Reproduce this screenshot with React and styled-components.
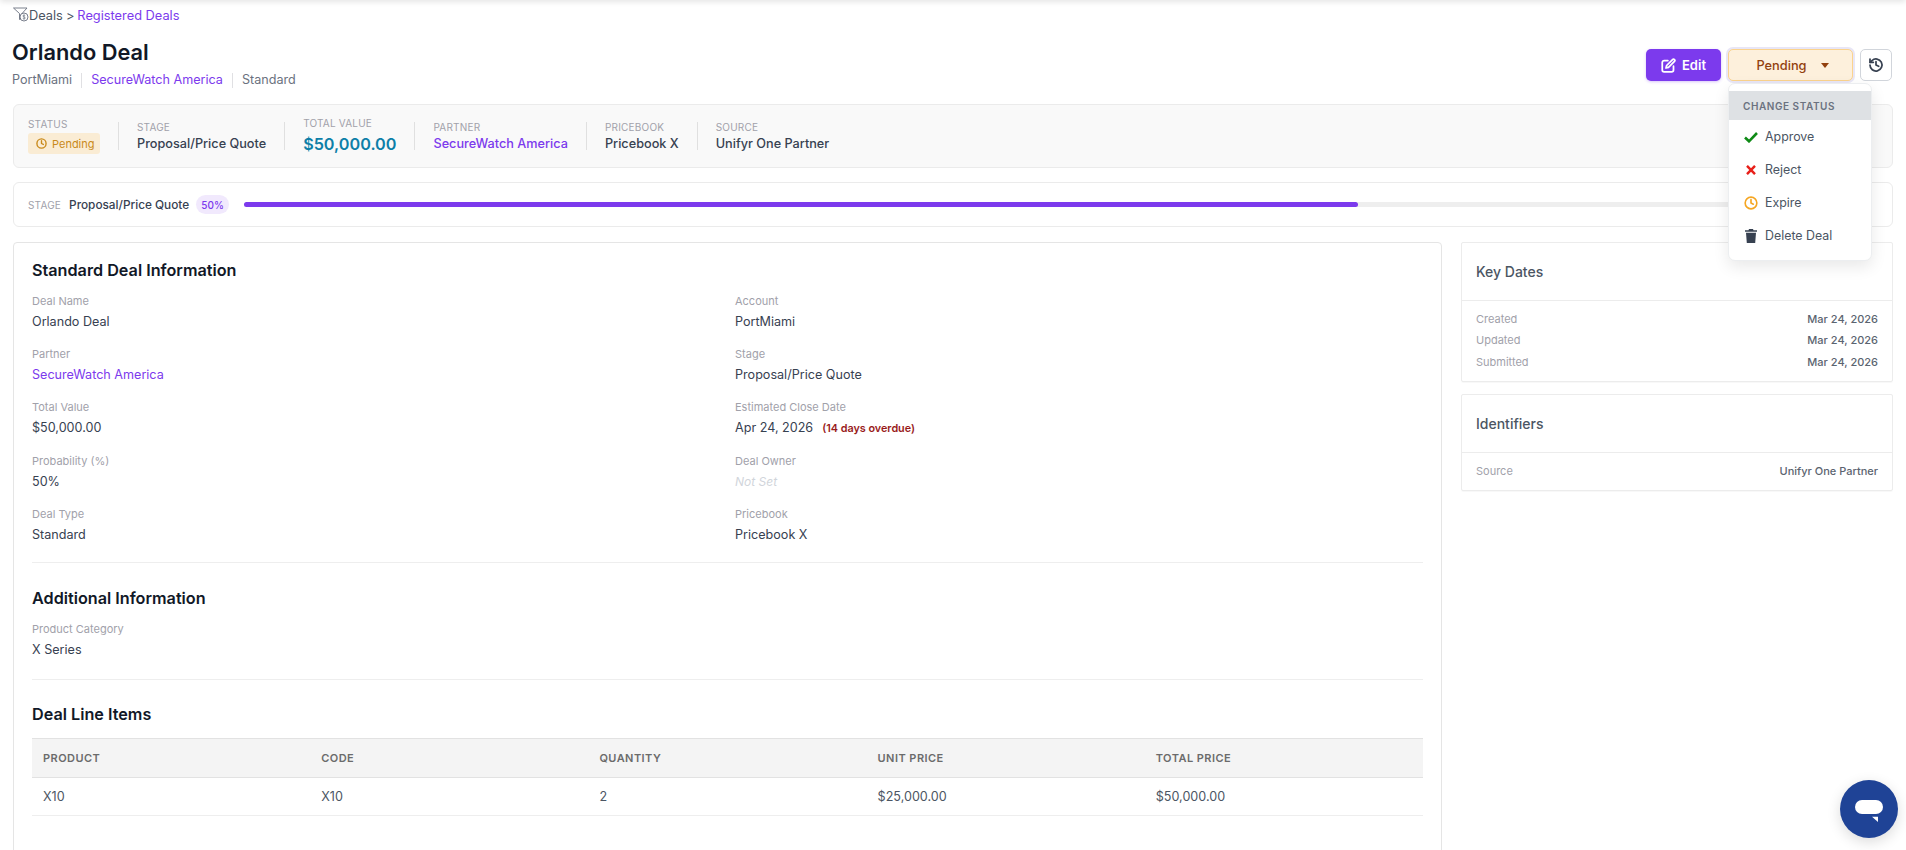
import React from "react";
import styled, { createGlobalStyle } from "styled-components";

const Global = createGlobalStyle`
  html, body { margin: 0; padding: 0; height: 100%; overflow: hidden; background: #fff; }
  body { font-family: Inter, "Liberation Sans", sans-serif; color: #374151; }
  #root { height: 100%; }
  * { box-sizing: border-box; }
`;

const Page = styled.div`
  position: relative;
  height: 850px;
  overflow: hidden;
  padding: 0 13px;
  &::before {
    content: "";
    position: absolute;
    left: 0; right: 0; top: -6px;
    height: 6px;
    box-shadow: 0 1px 6px rgba(0,0,0,.14);
  }
`;

const Crumbs = styled.div`
  display: flex;
  align-items: center;
  height: 30px;
  font-size: 12.8px;
  color: #4b5563;
  a { color: #7c3aed; }
  span { margin: 0 3px; }
`;

const Header = styled.div`
  display: flex;
  justify-content: space-between;
  align-items: flex-start;
  height: 74px;
`;

const TitleBlock = styled.div`
  margin-left: -1px;
`;

const Title = styled.h1`
  margin: 9px 0 0;
  font-size: 21.8px;
  line-height: 26px;
  font-weight: 600;
  color: #111827;
`;

const Sub = styled.div`
  display: flex;
  align-items: center;
  margin-top: 7px;
  font-size: 12.6px;
  line-height: 16px;
  color: #6b7280;
  a { color: #7c3aed; }
`;

const SubSep = styled.i`
  width: 1px;
  height: 15px;
  background: #e0e0e3;
  margin: 0 9px;
`;

const Actions = styled.div`
  position: relative;
  display: flex;
  gap: 7px;
  margin-top: 19px;
  margin-right: 1px;
`;

const EditBtn = styled.button`
  display: flex;
  align-items: center;
  justify-content: center;
  gap: 6px;
  width: 75px;
  height: 32px;
  border: 0;
  border-radius: 5px;
  background: #7c3aed;
  color: #fff;
  font: 600 13px Inter, sans-serif;
  box-shadow: 0 1px 3px rgba(124,58,237,.3);
`;

const StatusBtn = styled.button`
  display: flex;
  align-items: center;
  justify-content: center;
  gap: 14px;
  width: 125px;
  height: 32px;
  padding: 0 0 0 4px;
  border: 1px solid #fbd38d;
  border-radius: 5px;
  background: #fdf0dc;
  color: #92400e;
  font: 500 12.8px Inter, sans-serif;
  box-shadow: 0 0 0 2px #e8e6f6;
`;

const Caret = styled.i`
  width: 0; height: 0;
  border-left: 4.5px solid transparent;
  border-right: 4.5px solid transparent;
  border-top: 5px solid #92400e;
`;

const IconBtn = styled.button`
  display: flex;
  align-items: center;
  justify-content: center;
  width: 32px;
  height: 32px;
  border: 1px solid #d1d5db;
  border-radius: 5px;
  background: #fff;
  padding: 0;
`;

const Menu = styled.div`
  position: absolute;
  z-index: 5;
  top: 34px;
  left: 82px;
  width: 144px;
  height: 178px;
  padding-top: 7px;
  background: #fff;
  border: 1px solid #eceef0;
  border-radius: 7px;
  box-shadow: 0 6px 16px rgba(0,0,0,.09);
`;

const MenuHead = styled.div`
  height: 29px;
  padding-left: 14px;
  display: flex;
  align-items: center;
  background: #dee1e4;
  color: #6b7280;
  font-size: 10px;
  font-weight: 600;
  letter-spacing: .55px;
`;

const MenuItem = styled.div`
  display: flex;
  align-items: center;
  height: 33px;
  padding-left: 15px;
  gap: 7px;
  font-size: 12.4px;
  color: #4b5563;
  svg { flex: none; width: 14px; }
`;

const Card = styled.div`
  border: 1px solid #ebebeb;
  border-radius: 6px;
  background: ${p => p.$bg || "#fff"};
`;

const Stats = styled(Card)`
  display: flex;
  align-items: center;
  height: 64px;
  padding: 0 14px;
`;

const Stat = styled.div`
  display: flex;
  flex-direction: column;
  gap: ${p => p.$gap || 3}px;
`;

const StatSep = styled.i`
  width: 1px;
  height: 28px;
  margin: 0 18px;
  background: #e0e0e0;
`;

const StatLabel = styled.div`
  font-size: 10px;
  line-height: 12px;
  letter-spacing: .2px;
  color: #a1a1aa;
  text-transform: uppercase;
`;

const StatValue = styled.div`
  font-size: 12.7px;
  line-height: 16px;
  font-weight: 500;
  color: ${p => p.$link ? "#7c3aed" : "#374151"};
`;

const BigValue = styled.div`
  font-size: 16.2px;
  line-height: 22px;
  font-weight: 600;
  color: #0e7fa8;
`;

const Badge = styled.div`
  display: flex;
  align-items: center;
  gap: 5px;
  width: 72px;
  height: 21px;
  padding-left: 8px;
  border-radius: 3px;
  background: #faecd4;
  color: #c98a1a;
  font-size: 11px;
`;

const StageBar = styled(Card)`
  display: flex;
  align-items: center;
  height: 45px;
  margin-top: 14px;
  padding: 0 14px;
`;

const StageName = styled.div`
  margin-left: 8px;
  font-size: 11.8px;
  font-weight: 500;
  color: #374151;
`;

const Percent = styled.div`
  display: flex;
  align-items: center;
  justify-content: center;
  width: 33px;
  height: 19px;
  margin: 0 15px 0 7px;
  border-radius: 10px;
  background: #f1e9fd;
  color: #7c3aed;
  font-size: 10px;
  font-weight: 500;
`;

const Track = styled.div`
  flex: 1;
  height: 5px;
  margin-right: 10px;
  border-radius: 3px;
  background: #eeeeee;
`;

const Fill = styled.div`
  height: 100%;
  border-radius: 3px;
  background: #7c3aed;
`;

const Columns = styled.div`
  display: flex;
  gap: 19px;
  margin-top: 15px;
  align-items: flex-start;
`;

const Main = styled(Card)`
  width: 1429px;
  height: 900px;
  padding: 17px 18px 0;
  border-width: 1.5px;
  border-color: #e5e5e5;
  border-radius: 4px;
`;

const Heading = styled.h2`
  margin: 0;
  font-size: 16.2px;
  line-height: 20px;
  font-weight: 600;
  color: #111827;
`;

const Grid = styled.div`
  display: grid;
  grid-template-columns: 1fr 1fr;
  column-gap: 15px;
  margin-top: 14px;
`;

const Field = styled.div`
  height: 53.2px;
`;

const Label = styled.div`
  font-size: 11px;
  line-height: 14px;
  color: #a1a1aa;
`;

const Value = styled.div`
  margin-top: 6px;
  font-size: 12.6px;
  line-height: 16px;
  color: ${p => p.$link ? "#7c3aed" : "#374151"};
  font-style: ${p => p.$muted ? "italic" : "normal"};
  ${p => p.$muted && "color:#d1d5db; font-size:12px;"}
`;

const Overdue = styled.span`
  margin-left: 9px;
  font-size: 10.8px;
  font-weight: 600;
  color: #991b1b;
`;

const Rule = styled.hr`
  border: 0;
  border-top: 1px solid #eeeeee;
  margin: ${p => p.$m || "0"};
`;

const Table = styled.table`
  width: 100%;
  margin-top: 14px;
  border-collapse: collapse;
  table-layout: fixed;
  font-size: 12.6px;
  th {
    height: 39px;
    padding: 0 11px;
    text-align: left;
    background: #f4f4f4;
    border-top: 1px solid #e2e2e2;
    border-bottom: 1px solid #e2e2e2;
    font-size: 11px;
    font-weight: 600;
    letter-spacing: .45px;
    color: #6b6b6b;
  }
  td {
    height: 38px;
    padding: 0 11px;
    border-bottom: 1px solid #eeeeee;
    color: #4b5563;
  }
`;

const Side = styled.div`
  flex: 1;
  display: flex;
  flex-direction: column;
  gap: 12px;
`;

const SideCard = styled.div`
  border: 1px solid #ececec;
  border-radius: 2px;
  box-shadow: 0 1px 1px rgba(0,0,0,.03);
`;

const SideHead = styled.div`
  display: flex;
  align-items: center;
  height: 58px;
  padding: 0 14px;
  border-bottom: 1px solid #ececec;
  font-size: 14px;
  font-weight: 500;
  color: #4b5563;
`;

const SideBody = styled.div`
  padding: 7px 14px 8.5px;
`;

const SideRow = styled.div`
  display: flex;
  justify-content: space-between;
  align-items: center;
  height: 21.5px;
  font-size: 11px;
  color: #a1a1aa;
  b { font-weight: 500; color: #5b6470; }
`;

const Chat = styled.div`
  position: absolute;
  right: 8px;
  bottom: 12px;
  width: 58px;
  height: 58px;
  border-radius: 50%;
  background: #1f4396;
  display: flex;
  align-items: center;
  justify-content: center;
  box-shadow: 0 4px 14px rgba(0,0,0,.14);
`;

const Pending = () => (
  <svg width="11" height="11" viewBox="0 0 24 24" fill="none" stroke="#c98a1a" strokeWidth="3" strokeLinecap="round" strokeLinejoin="round">
    <circle cx="12" cy="12" r="10" /><path d="M12 6v6l4 2" />
  </svg>
);

const FunnelIcon = () => (
  <svg width="16" height="17" viewBox="0 0 16 17" fill="none" stroke="#6b7280" strokeWidth=".9" style={{ flex: "none", marginTop: -2 }}>
    <path d="M0.5 2h13.5L9 7.5M0.5 2l6 5.5v6l1.5-1" />
    <circle cx="11" cy="11" r="4" />
    <path d="M12.2 9.5c-.5-.5-2.3-.6-2.3.5s2.4.8 2.4 2-1.9 1-2.5.5M11 8.5v5" strokeWidth=".7" />
  </svg>
);

const info = [
  ["Deal Name", <Value key="v">Orlando Deal</Value>],
  ["Account", <Value key="v">PortMiami</Value>],
  ["Partner", <Value key="v" $link>SecureWatch America</Value>],
  ["Stage", <Value key="v">Proposal/Price Quote</Value>],
  ["Total Value", <Value key="v">$50,000.00</Value>],
  ["Estimated Close Date", <Value key="v">Apr 24, 2026<Overdue>(14 days overdue)</Overdue></Value>],
  ["Probability (%)", <Value key="v">50%</Value>],
  ["Deal Owner", <Value key="v" $muted>Not Set</Value>],
  ["Deal Type", <Value key="v">Standard</Value>],
  ["Pricebook", <Value key="v">Pricebook X</Value>],
];

export default function App() {
  return (
    <Page>
      <Global />
      <Crumbs>
        <FunnelIcon />
        Deals<span>&gt;</span><a>Registered Deals</a>
      </Crumbs>
      <Header>
        <TitleBlock>
          <Title>Orlando Deal</Title>
          <Sub>PortMiami<SubSep /><a>SecureWatch America</a><SubSep />Standard</Sub>
        </TitleBlock>
        <Actions>
          <EditBtn>
            <svg width="15" height="15" viewBox="0 0 24 24" fill="none" stroke="#fff" strokeWidth="2.8" strokeLinecap="round" strokeLinejoin="round">
              <path d="M11 4H5a3 3 0 0 0-3 3v12a3 3 0 0 0 3 3h12a3 3 0 0 0 3-3v-6" />
              <path d="M18.5 2.5a2.1 2.1 0 0 1 3 3L12 15l-4 1 1-4z" />
            </svg>
            Edit
          </EditBtn>
          <StatusBtn>Pending<Caret /></StatusBtn>
          <IconBtn>
            <svg width="16" height="16" viewBox="0 0 24 24" fill="none" stroke="#374151" strokeWidth="2.6" strokeLinecap="round" strokeLinejoin="round">
              <path d="M3 12a9 9 0 1 0 3-6.7L3 8" /><path d="M3 3v5h5" /><path d="M12 7v5l4 2" />
            </svg>
          </IconBtn>
          <Menu>
            <MenuHead>CHANGE STATUS</MenuHead>
            <MenuItem>
              <svg width="14" height="12" viewBox="0 0 14 12" fill="none" stroke="#0f8a16" strokeWidth="2.6"><path d="M1 6.5l4 3.8L13 2" /></svg>
              Approve
            </MenuItem>
            <MenuItem>
              <svg width="14" height="10" viewBox="0 0 14 10" fill="none" stroke="#e8201a" strokeWidth="2.4"><path d="M3 .8l8 8.4M11 .8l-8 8.4" /></svg>
              Reject
            </MenuItem>
            <MenuItem>
              <svg width="14" height="14" viewBox="0 0 24 24" fill="none" stroke="#f5a623" strokeWidth="2.8" strokeLinecap="round" strokeLinejoin="round"><circle cx="12" cy="12" r="10" /><path d="M12 6v6l4 2" /></svg>
              Expire
            </MenuItem>
            <MenuItem>
              <svg width="14" height="14" viewBox="0 0 14 14" fill="#374151"><path d="M5 0h4l.5 1.2H13v1.6H1V1.2h3.5zM2 3.8h10L11.2 14H2.8z" /></svg>
              Delete Deal
            </MenuItem>
          </Menu>
        </Actions>
      </Header>

      <Stats $bg="#f9f9f9">
        <Stat>
          <StatLabel>Status</StatLabel>
          <Badge><Pending />Pending</Badge>
        </Stat>
        <StatSep />
        <Stat><StatLabel>Stage</StatLabel><StatValue>Proposal/Price Quote</StatValue></Stat>
        <StatSep />
        <Stat $gap={4}><StatLabel>Total Value</StatLabel><BigValue>$50,000.00</BigValue></Stat>
        <StatSep />
        <Stat><StatLabel>Partner</StatLabel><StatValue $link>SecureWatch America</StatValue></Stat>
        <StatSep />
        <Stat><StatLabel>Pricebook</StatLabel><StatValue>Pricebook X</StatValue></Stat>
        <StatSep />
        <Stat><StatLabel>Source</StatLabel><StatValue>Unifyr One Partner</StatValue></Stat>
      </Stats>

      <StageBar>
        <StatLabel>Stage</StatLabel>
        <StageName>Proposal/Price Quote</StageName>
        <Percent>50%</Percent>
        <Track><Fill style={{ width: "68.6%" }} /></Track>
      </StageBar>

      <Columns>
        <Main>
          <Heading>Standard Deal Information</Heading>
          <Grid>
            {info.map(([l, v]) => (
              <Field key={l}><Label>{l}</Label>{v}</Field>
            ))}
          </Grid>
          <Rule $m="2px 0 25px" />
          <Heading>Additional Information</Heading>
          <Grid>
            <Field><Label>Product Category</Label><Value>X Series</Value></Field>
          </Grid>
          <Rule $m="4px 0 24px" />
          <Heading>Deal Line Items</Heading>
          <Table>
            <thead>
              <tr><th>PRODUCT</th><th>CODE</th><th>QUANTITY</th><th>UNIT PRICE</th><th>TOTAL PRICE</th></tr>
            </thead>
            <tbody>
              <tr><td>X10</td><td>X10</td><td>2</td><td>$25,000.00</td><td>$50,000.00</td></tr>
            </tbody>
          </Table>
        </Main>
        <Side>
          <SideCard>
            <SideHead>Key Dates</SideHead>
            <SideBody>
              <SideRow>Created<b>Mar 24, 2026</b></SideRow>
              <SideRow>Updated<b>Mar 24, 2026</b></SideRow>
              <SideRow>Submitted<b>Mar 24, 2026</b></SideRow>
            </SideBody>
          </SideCard>
          <SideCard>
            <SideHead>Identifiers</SideHead>
            <SideBody>
              <SideRow>Source<b>Unifyr One Partner</b></SideRow>
            </SideBody>
          </SideCard>
        </Side>
      </Columns>

      <Chat>
        <svg width="30" height="26" viewBox="0 0 30 26" fill="#fff">
          <rect x="1" y="4" width="28" height="14" rx="7" />
          <path d="M18 20.7h6V26z" />
        </svg>
      </Chat>
    </Page>
  );
}
